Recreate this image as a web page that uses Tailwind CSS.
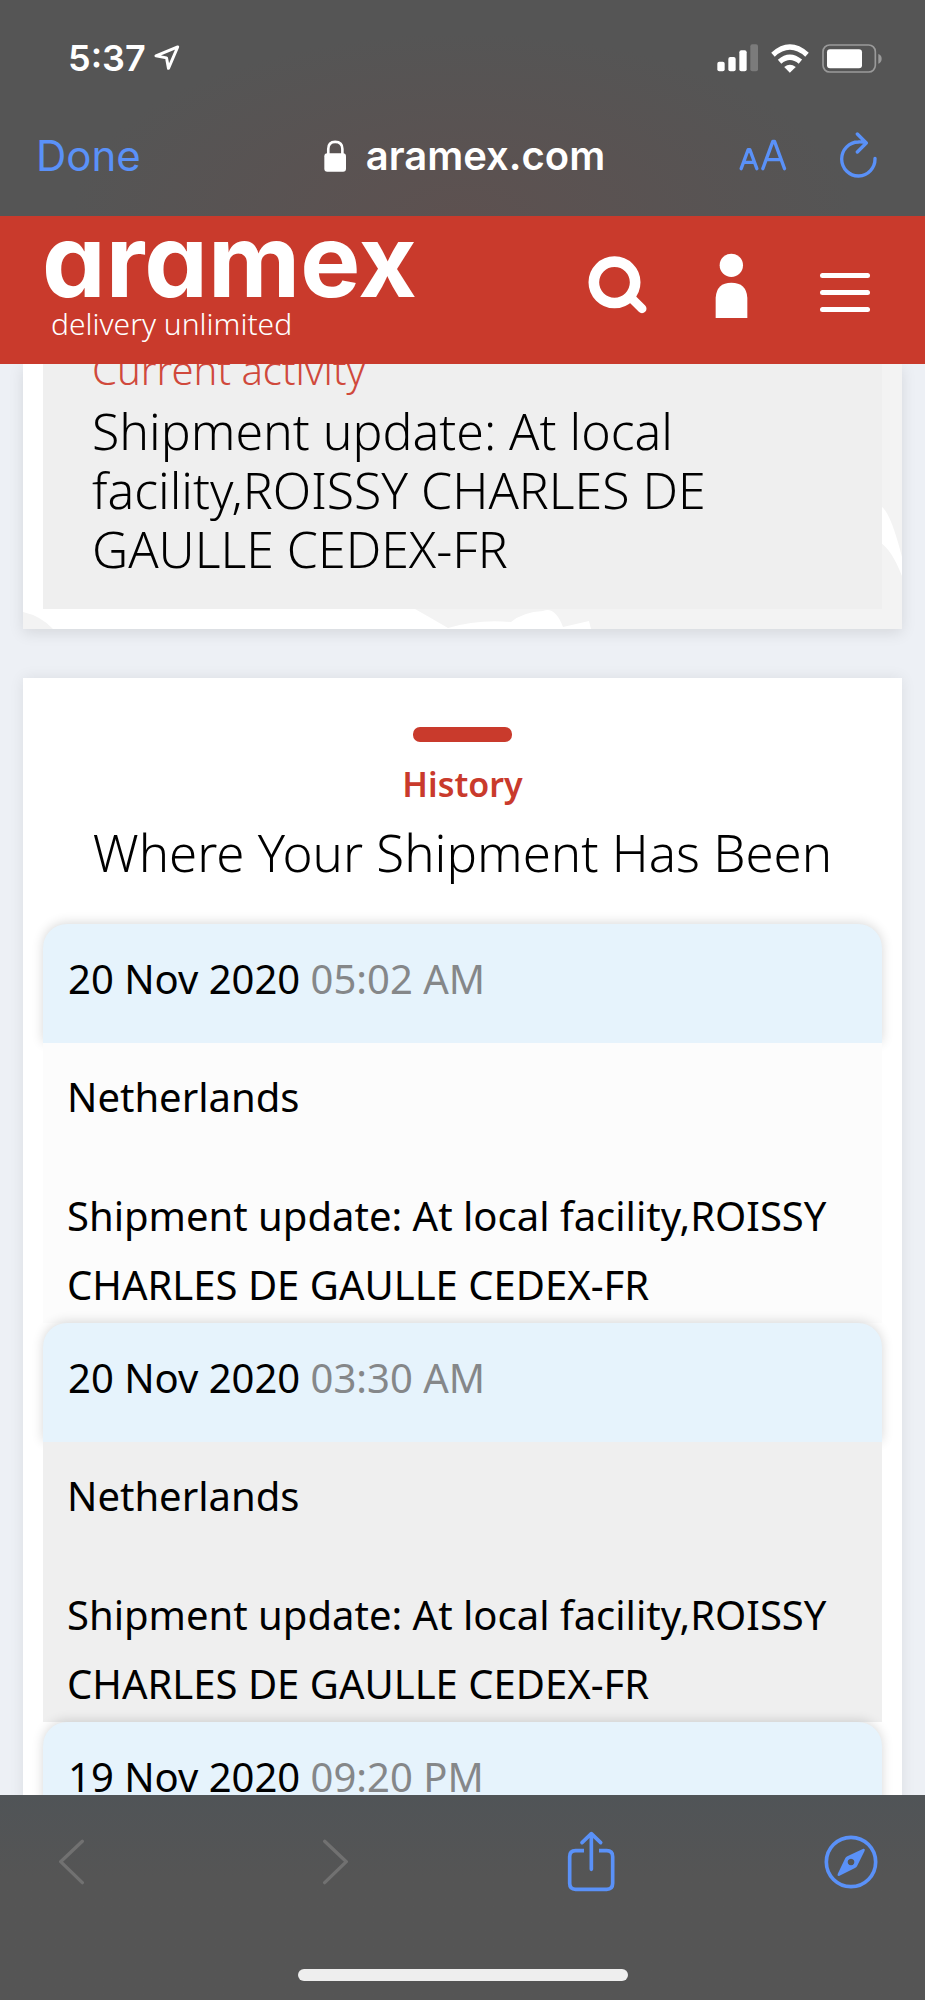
<!DOCTYPE html>
<html lang="en">
<head>
<meta charset="utf-8">
<meta name="viewport" content="width=device-width, initial-scale=1">
<title>aramex.com</title>
<script src="https://cdn.jsdelivr.net/npm/@tailwindcss/browser@4"></script>
</head>
<body class="flex h-screen flex-col overflow-hidden bg-[#edf0f5] font-['Noto_Sans',sans-serif] text-black">

<!-- Status bar and browser bar -->
<div class="shrink-0 bg-[#555555] bg-radial-[at_50%_100%] from-[#5d5150] to-[#555555] to-60% font-[Inter,sans-serif] text-white">
  <div class="flex h-[116px] items-center justify-between pl-[68px] pr-[43px]">
    <div class="flex items-center gap-2">
      <span class="text-[36px] font-semibold leading-none">5:37</span>
      <svg class="h-[26px] w-[26px]" viewBox="460 136 79 79" fill="none" stroke="#fff" stroke-width="9" stroke-linejoin="round" aria-hidden="true"><path d="M532 142 L466 169 L498 175 L504 207 Z"/></svg>
    </div>
    <div class="flex items-center gap-[13px]">
      <svg class="h-[28px] w-[41px]" viewBox="764 134 123 84" fill="#fff" aria-hidden="true"><rect x="765" y="187" width="22" height="29" rx="6"/><rect x="798" y="173" width="22" height="43" rx="6"/><rect x="831" y="153" width="22" height="63" rx="6"/><rect x="864" y="135" width="23" height="81" rx="6" fill="#7b7b7b"/></svg>
      <svg class="h-[29px] w-[38px]" viewBox="926 129 115 87" aria-hidden="true"><g fill="none" stroke="#fff" stroke-width="16"><path d="M932 161 Q983 115 1035 161"/><path d="M952 182 Q983 155 1015 182"/></g><path d="M966 198 Q983 185 1001 198 L983 216 Z" fill="#fff"/></svg>
      <svg class="h-[29px] w-[60px]" viewBox="1080 131 180 87" aria-hidden="true"><rect x="1083" y="134" width="157" height="81" rx="20" fill="none" stroke="#9a9a9a" stroke-width="5"/><rect x="1095" y="147" width="105" height="57" rx="9" fill="#fff"/><path d="M1249 161 Q1259 165 1259 175 Q1259 186 1249 190 Z" fill="#9a9a9a"/></svg>
    </div>
  </div>
  <div class="grid h-[100px] grid-cols-[1fr_auto_1fr] items-start px-[36px] pt-[16px]">
    <button type="button" class="justify-self-start text-[42px] leading-[48px] text-[#5a91f8]">Done</button>
    <div class="flex items-center gap-5 pl-1">
      <svg class="h-[32px] w-[22px]" viewBox="974 417 67 96" aria-hidden="true"><rect x="975" y="457" width="66" height="56" rx="9" fill="#fff"/><path d="M987 462 V444 Q987 422 1008 422 Q1030 422 1030 444 V462" fill="none" stroke="#fff" stroke-width="8"/></svg>
      <span class="text-[40px] font-semibold leading-[48px]">aramex.com</span>
    </div>
    <div class="flex items-center gap-[53px] justify-self-end pr-3">
      <button type="button" aria-label="Text size"><svg class="h-[32px] w-[48px]" viewBox="832 420 143 96" fill="none" stroke="#5a91f8" stroke-width="10" stroke-linecap="round" stroke-linejoin="round"><path d="M838 509 L859 452 H864 L885 509 M845 490 H878 M903 509 L933 427 H938 L968 509 M914 482 H957"/></svg></button>
      <button type="button" aria-label="Reload"><svg class="h-[46px] w-[37px]" viewBox="1136 398 111 138" fill="none" stroke="#5a91f8" stroke-width="10" stroke-linecap="round" stroke-linejoin="round"><path d="M1241 477 A50 51 0 1 1 1191 428 Q1203 427 1215 431 M1188 404 L1215 431 L1188 458"/></svg></button>
    </div>
  </div>
</div>

<!-- Site header -->
<header class="z-10 flex h-[148px] shrink-0 items-start justify-between bg-[#c93a2c] pl-[42px] pr-[55px] text-white">
  <a href="#" class="flex flex-col pt-[2px]">
    <span class="font-[Inter,sans-serif] text-[101px] font-bold leading-[84px] [font-feature-settings:'cv11','ss03']">aramex</span>
    <span class="mt-1 pl-[9px] text-[30px] font-light leading-[36px]">delivery unlimited</span>
  </a>
  <nav class="flex items-start gap-[68px] pt-[37px]">
    <button type="button" aria-label="Search" class="pt-[3px]"><svg class="h-[58px] w-[59px]" viewBox="380 766 177 174" fill="none" stroke="#fff" stroke-linecap="round"><circle cx="459.500" cy="845" r="62" stroke-width="32"/><path d="M514 896 L542 924" stroke-width="27"/></svg></button>
    <button type="button" aria-label="Account"><svg class="h-[66px] w-[33px]" viewBox="760 757 99 198" fill="#fff"><circle cx="809" cy="794" r="35"/><path d="M762 952 V891 Q765 846 809 846 Q854 846 857 891 V952 Z"/></svg></button>
    <button type="button" aria-label="Menu" class="flex flex-col gap-3 pt-[20px] pl-1"><span class="block h-[5px] w-[50px] rounded-full bg-white"></span><span class="block h-[5px] w-[50px] rounded-full bg-white"></span><span class="block h-[5px] w-[50px] rounded-full bg-white"></span></button>
  </nav>
</header>

<!-- Page, scrolled part-way down -->
<main class="flex min-h-0 flex-1 flex-col gap-[49px] overflow-hidden px-[23px]">
  <section class="relative shrink-0 bg-white px-[20px] pb-[20px] shadow-[0_4px_14px_rgba(0,0,0,0.1)]">
    <!-- Faint map texture behind the panel -->
    <svg class="absolute inset-0 h-full w-full" viewBox="0 0 879 265" preserveAspectRatio="none" fill="#f3f3f3" aria-hidden="true"><path d="M856 0 H879 V193 Q868 150 859 143 L856 130 Z M856 178 Q868 184 879 212 V265 H568 L566 257 L540 263 Q532 242 520 247 Q500 248 488 258 Q455 255 425 264 Q408 254 392 245 H856 Z M0 248 Q18 252 30 265 H0 Z"/></svg>
    <div class="relative -mt-[18px] bg-[#efefef] px-[49px] pb-[30px]">
      <h2 class="text-[40px] font-light leading-[48px] text-[#d0493c]">Current activity</h2>
      <p class="pt-[8px] text-[50px] font-light leading-[59px]">Shipment update: At local facility,ROISSY CHARLES DE GAULLE CEDEX-FR</p>
    </div>
  </section>

  <section class="shrink-0 bg-white px-[20px] pt-[49px] shadow-[0_0_14px_rgba(0,0,0,0.08)]">
    <div class="mx-auto h-[15px] w-[99px] rounded-[7px] bg-[#c93a2c]"></div>
    <p class="pt-[18px] text-center text-[34px] font-semibold leading-[48px] text-[#c93a2c]">History</p>
    <h2 class="pt-[10px] pb-[37px] text-center text-[51px] font-light leading-[69px]">Where Your Shipment Has Been</h2>
    <ol class="text-[40px] leading-[69px]">
      <li>
        <h3 class="h-[119px] rounded-t-[24px] bg-[#e6f3fc] px-[25px] pt-[20px] shadow-[0_-1px_12px_rgba(0,0,0,0.16)]">20 Nov 2020 <time class="text-[#858789]">05:02 AM</time></h3>
        <div class="relative bg-[#fcfcfc] px-[24px] pt-[19px] pb-[4px]">
          <p>Netherlands</p>
          <p class="pt-[50px]">Shipment update: At local facility,ROISSY CHARLES DE GAULLE CEDEX-FR</p>
        </div>
      </li>
      <li>
        <h3 class="relative h-[119px] rounded-t-[24px] bg-[#e6f3fc] px-[25px] pt-[20px] shadow-[0_-1px_12px_rgba(0,0,0,0.16)]">20 Nov 2020 <time class="text-[#858789]">03:30 AM</time></h3>
        <div class="relative bg-[#efefef] px-[24px] pt-[19px] pb-[4px]">
          <p>Netherlands</p>
          <p class="pt-[50px]">Shipment update: At local facility,ROISSY CHARLES DE GAULLE CEDEX-FR</p>
        </div>
      </li>
      <li>
        <h3 class="relative h-[119px] rounded-t-[24px] bg-[#e6f3fc] px-[25px] pt-[20px] shadow-[0_-1px_12px_rgba(0,0,0,0.16)]">19 Nov 2020 <time class="text-[#858789]">09:20 PM</time></h3>
      </li>
    </ol>
  </section>
</main>

<!-- Browser toolbar -->
<footer class="z-10 flex h-[205px] shrink-0 flex-col items-center justify-between bg-linear-to-b from-[#505457] to-[#555555] to-40% pb-[19px] pt-[36px]">
  <div class="flex w-full items-center justify-between pl-[44px] pr-[47px]">
    <button type="button" class="flex w-[54px] justify-center" aria-label="Back" disabled><svg class="h-[46px] w-[27px]" viewBox="172 176 81 138" fill="none" stroke="#717171" stroke-width="10" stroke-linecap="round" stroke-linejoin="round"><path d="M245 183 L180 244 L245 307"/></svg></button>
    <button type="button" class="flex w-[54px] justify-center pl-2" aria-label="Forward" disabled><svg class="h-[46px] w-[27px]" viewBox="967 176 81 138" fill="none" stroke="#717171" stroke-width="10" stroke-linecap="round" stroke-linejoin="round"><path d="M975 183 L1040 244 L975 307"/></svg></button>
    <button type="button" class="flex w-[54px] justify-center" aria-label="Share"><svg class="h-[62px] w-[48px]" viewBox="318 150 144 186" fill="none" stroke="#5a91f8" stroke-width="11"><path d="M369 209 H344 Q326 209 326 227 V307 Q326 325 344 325 H437 Q455 325 455 307 V227 Q455 209 437 209 H414"/><path d="M391 265 V159 M363 185 L391 158 L419 185" stroke-linecap="round" stroke-linejoin="round"/></svg></button>
    <button type="button" class="flex w-[54px] justify-center" aria-label="Open in Safari"><svg class="h-[54px] w-[54px]" viewBox="1086 166 162 162"><circle cx="1167" cy="247" r="74" fill="none" stroke="#5a91f8" stroke-width="11"/><path fill="#5a91f8" fill-rule="evenodd" d="M1204 207 Q1210 206 1208 213 L1185 260 Q1183 263 1179 265 L1131 289 Q1125 290 1127 283 L1150 235 Q1152 232 1156 230 Z M1167 237 a10 10 0 1 0 0.100 0 Z"/></svg></button>
  </div>
  <div class="h-[12px] w-[330px] rounded-full bg-[#eeeeee]"></div>
</footer>
</body>
</html>
